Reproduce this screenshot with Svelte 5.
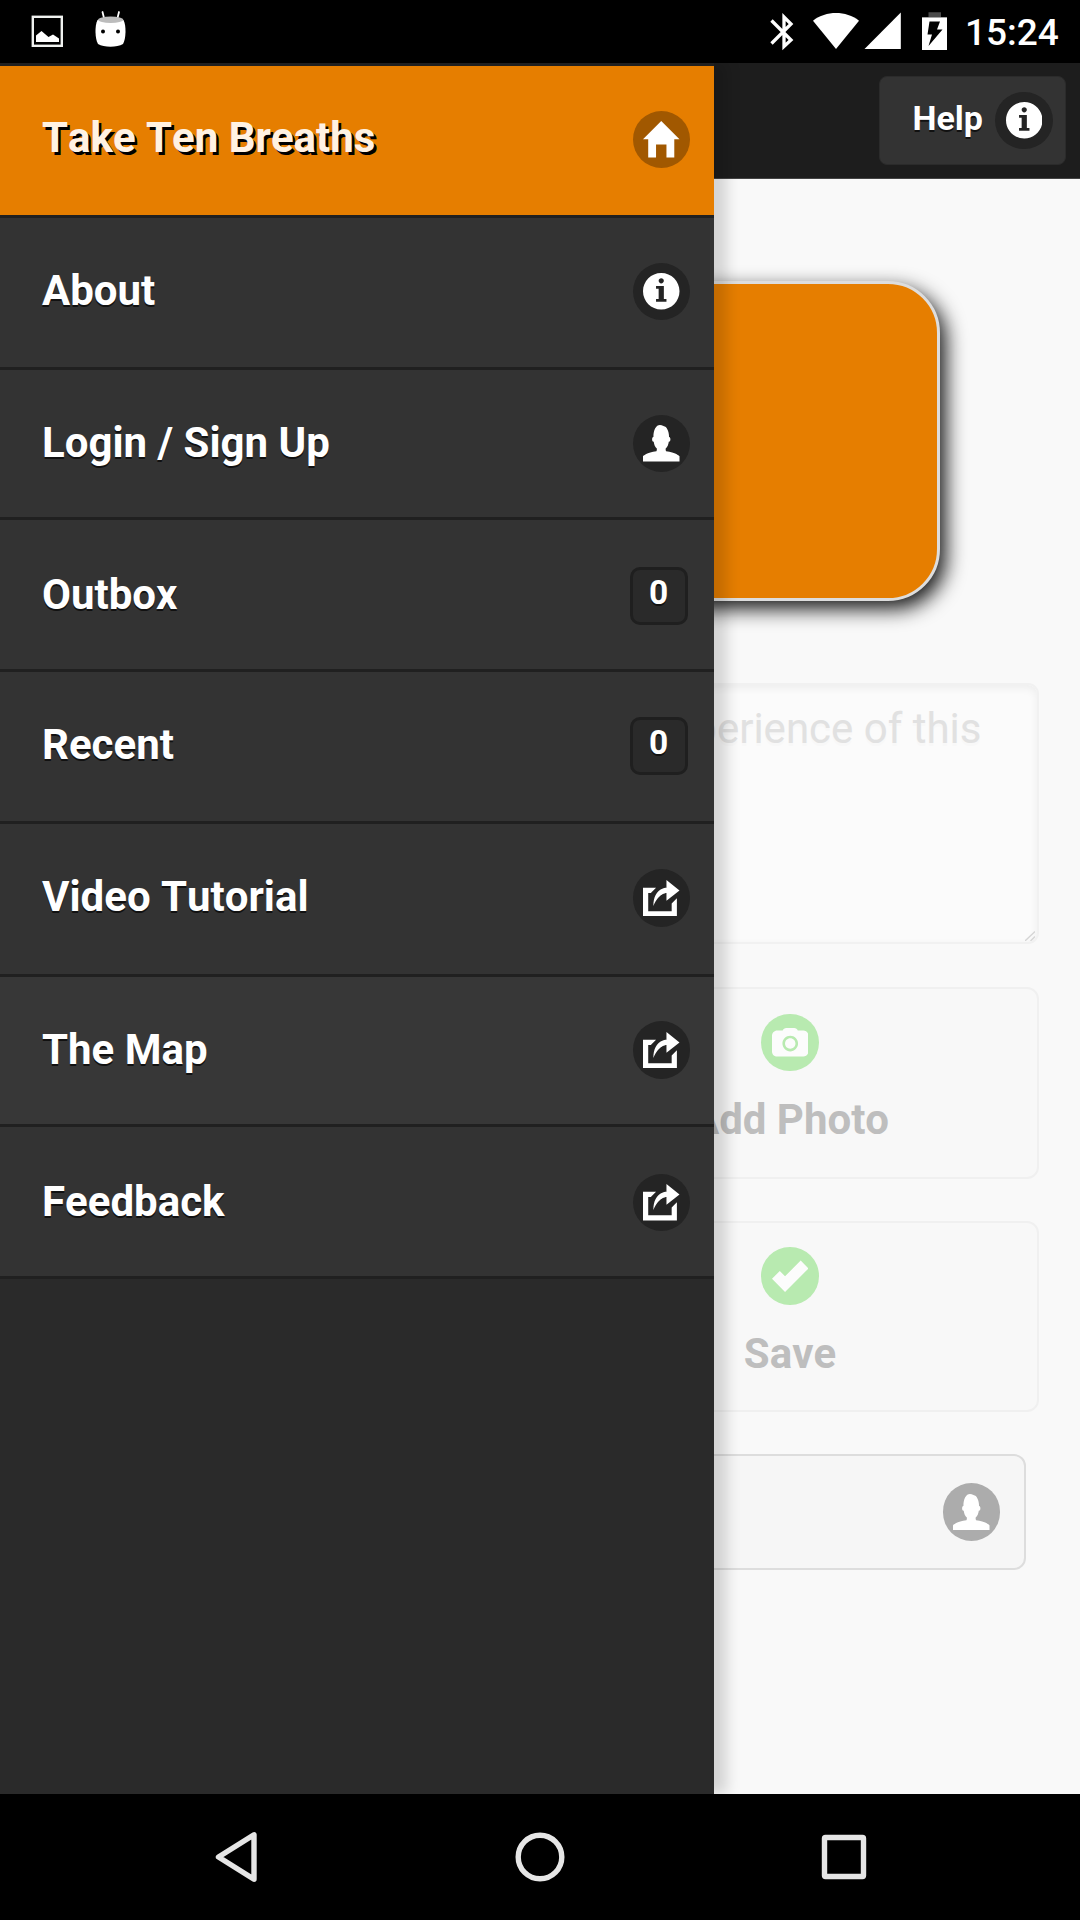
<script>
  const items = [
    { label: 'Take Ten Breaths', icon: 'home', kind: 'active' },
    { label: 'About', icon: 'info' },
    { label: 'Login / Sign Up', icon: 'user', kind: 'short' },
    { label: 'Outbox', count: 0, kind: 'low' },
    { label: 'Recent', count: 0 },
    { label: 'Video Tutorial', icon: 'action', kind: 'tall' },
    { label: 'The Map', icon: 'action', kind: 'hover' },
    { label: 'Feedback', icon: 'action', kind: 'low last' }
  ];

  const icons = {
    home: 'M7,0L0,7H2V14H5V9H9V14H12V7H14Z',
    info: 'M7,0C3.134,0,0,3.134,0,7s3.134,7,7,7s7-3.134,7-7S10.866,0,7,0z M7,2c0.552,0,1,0.447,1,1S7.552,4,7,4S6,3.553,6,3S6.448,2,7,2z M9,11H5v-1h1V6H5V5h3v5h1V11z',
    user: 'M8.851,10.101c-0.18-0.399-0.2-0.763-0.153-1.104C9.383,8.49,9.738,7.621,9.891,6.465C10.493,6.355,10.5,5.967,10.5,5.5c0-0.437-0.008-0.804-0.502-0.94C9.999,4.539,10,4.521,10,4.5c0-2.103-1-4-2-4C8,0.5,7.5,0,6.5,0C5,0,4,1.877,4,4.5c0,0.021,0.001,0.039,0.002,0.06C3.508,4.696,3.5,5.063,3.5,5.5c0,0.467,0.007,0.855,0.609,0.965C4.262,7.621,4.617,8.49,5.303,8.997c0.047,0.341,0.026,0.704-0.153,1.104C1.503,10.503,0,12,0,12v2h14v-2C14,12,12.497,10.503,8.851,10.101z',
    action: 'M9,5v3l5-4L9,0v3c0,0-5,0-5,7C6,5,9,5,9,5z M11,12H2V5h1l2-2H0v11h13V7l-2,2V12z',
    camera: 'M12,2.5H9.908C9.702,1.919,9.152,1.5,8.5,1.5h-3c-0.652,0-1.202,0.419-1.408,1H2c-1.104,0-2,0.896-2,2v6c0,1.104,0.896,2,2,2h10c1.104,0,2-0.896,2-2v-6C14,3.396,13.104,2.5,12,2.5z M7,10.5c-1.657,0-3-1.344-3-3c0-1.657,1.343-3,3-3s3,1.343,3,3C10,9.156,8.657,10.5,7,10.5z M7,5.5c-1.104,0-2,0.896-2,2c0,1.104,0.896,2,2,2s2-0.896,2-2C9,6.396,8.104,5.5,7,5.5z',
    check: 'M14,4L11,1L5,7L3,5L0,8L5,13Z'
  };
</script>

{#snippet disc(name, tone)}
  <span class="disc {tone}">
    <svg viewBox="0 0 14 14" width="36.5" height="36.5"><path d={icons[name]} fill-rule="evenodd" /></svg>
  </span>
{/snippet}

<div class="screen">
  <header class="status">
    <svg class="notices" viewBox="0 0 140 63" width="140" height="63">
      <rect x="32.8" y="16.8" width="29" height="29" fill="none" stroke="#f0f2f0" stroke-width="2.4" />
      <path d="M36 42V35.5L41.5 31L48.5 37L53 34.5L59 38.5V42Z" fill="#fff" />
      <path d="M102.5 12L104 18M119 12L117.5 18" stroke="#fff" stroke-width="1.8" stroke-linecap="round" />
      <path d="M97.5 20C105 17.500 116 17.500 123.500 20C126.500 26 126 39 123 44C117 47.500 104 47.500 98 44C95 39 94.500 26 97.500 20Z" fill="#fff" />
      <ellipse cx="110.700" cy="19.800" rx="12.500" ry="3.200" fill="#bcbcbc" />
      <circle cx="103" cy="31.600" r="2" /><circle cx="118" cy="31.600" r="2" />
    </svg>
    <svg viewBox="0 0 190 63" width="190" height="63">
      <path d="M11.500 20.500L31 40L24 46.500V17L31 24L11.500 43.500" fill="none" stroke="#fff" stroke-width="3.300" />
      <path d="M53 20.700C66 10.500 86 10.500 99 20.700L76 49Z" fill="#fff" />
      <path d="M104.500 49H140.800V12.500Z" fill="#fff" />
      <path d="M162 17H168.500V12.300H181V17H187V24H162Z" fill="#4a4a4a" />
      <path d="M162 17.500H187V50H162Z" fill="#fff" />
      <path d="M169.500 21.500H180L177 29.500H182.500L168.500 46L172 34.500H167.500Z" fill="#000" />
    </svg>
    <time>15:24</time>
  </header>

  <div class="stage">
    <main class="page">
      <div class="toolbar">
        <button class="help"><span>Help</span>{@render disc('info', 'dark')}</button>
      </div>
      <div class="content">
        <div class="breath"></div>
        <div class="note">
          perience of this
          <svg class="grip" viewBox="0 0 10 10" width="10" height="10"><path d="M0 10L10 .5M5.500 10L10 5.500" stroke="#d5d5d5" stroke-width="1.300" /></svg>
        </div>
        <button class="tile">{@render disc('camera', 'green')}<span>Add Photo</span></button>
        <button class="tile save">{@render disc('check', 'green')}<span>Save</span></button>
        <div class="account">{@render disc('user', 'grey')}</div>
      </div>
    </main>

    <nav class="drawer">
      {#each items as item}
        <a class="row {item.kind ?? ''}">
          <span class="label">{item.label}</span>
          {#if item.icon}
            {@render disc(item.icon, item.kind === 'active' ? 'brown' : 'dark')}
          {:else}
            <span class="badge">{item.count}</span>
          {/if}
        </a>
      {/each}
    </nav>
  </div>

  <footer class="navbar">
    <svg viewBox="0 0 50 54" width="50" height="54"><path d="M7.500 27L43 4.800V49.200Z" /></svg>
    <svg viewBox="0 0 54 54" width="54" height="54"><circle cx="27" cy="27" r="21.800" /></svg>
    <svg viewBox="0 0 50 54" width="50" height="54"><rect x="5.500" y="7.500" width="39" height="39" rx="1" /></svg>
  </footer>
</div>

<style>
  :global(body) { background: #000; }
  * { box-sizing: border-box; }
  .screen {
    width: 1080px;
    height: 1920px;
    display: flex;
    flex-direction: column;
    overflow: hidden;
    background: #000;
    font-family: Roboto, sans-serif;
    font-kerning: none;
  }
  .status {
    height: 63px;
    flex: none;
    display: flex;
    align-items: center;
    color: #fff;
  }
  .notices { margin-right: auto; }
  time {
    width: 130px;
    padding: 3px 0 0 15px;
    font-size: 37px;
    font-weight: 500;
    line-height: 44px;
  }
  .stage {
    position: relative;
    height: 1731px;
    overflow: hidden;
  }
  .page { height: 100%; background: #f9f9f9; }
  .toolbar {
    height: 116px;
    padding: 13px 14px 0 0;
    display: flex;
    justify-content: flex-end;
    align-items: flex-start;
    background: #1d1d1d;
    border-bottom: 1px solid #444;
  }
  button { font: inherit; margin: 0; }
  .help {
    width: 187px;
    height: 89px;
    padding: 0 12.5px 0 0;
    display: flex;
    align-items: center;
    justify-content: flex-end;
    gap: 12px;
    border: 1px solid #2b2b2b;
    border-radius: 8px;
    background: #333;
    color: #fff;
    font-size: 34px;
    font-weight: 700;
    text-shadow: 0 2px 0 #111;
  }
  .help span:first-child { padding-bottom: 6px; }
  .content {
    display: flex;
    flex-direction: column;
    align-items: flex-end;
    padding: 102px 41px 0 0;
  }
  .breath {
    width: 800px;
    height: 320px;
    margin-right: 99px;
    border: 3px solid #ddd;
    border-radius: 52px;
    background: #e67e00;
    box-shadow: 6px 8px 20px rgba(0, 0, 0, .9);
  }
  .note {
    position: relative;
    width: 998px;
    height: 261px;
    margin-top: 82px;
    padding: 19px 55.5px 0 0;
    border: 2px solid #f1f1f1;
    border-radius: 11px;
    background: #fbfbfb;
    box-shadow: inset 0 3px 8px rgba(0, 0, 0, .06);
    color: #e1e1e1;
    font-size: 42px;
    line-height: 50px;
    text-align: right;
    text-shadow: 0 3px 0 #f8f8f8;
  }
  .grip { position: absolute; right: 2px; bottom: 1px; }
  .tile {
    width: 498px;
    height: 192px;
    margin-top: 43px;
    padding: 24.5px 0 0;
    display: flex;
    flex-direction: column;
    align-items: center;
    gap: 23.5px;
    border: 2px solid #f0f0f0;
    border-radius: 12px;
    background: #f8f8f8;
    color: #bebebe;
    font-size: 42px;
    line-height: 50px;
    font-weight: 700;
  }
  .save { margin-top: 42px; height: 191px; padding-top: 24px; gap: 24px; }
  .account {
    width: 900px;
    height: 116px;
    margin: 42px 13px 0 0;
    padding: 0 24px 0.500px 0;
    display: flex;
    align-items: center;
    justify-content: flex-end;
    border: 2px solid #ddd;
    border-radius: 12px;
    background: #f6f6f6;
  }
  .disc {
    width: 57.5px;
    height: 57.5px;
    flex: none;
    display: flex;
    align-items: center;
    justify-content: center;
    border-radius: 50%;
    color: #fff;
  }
  .disc path { fill: currentColor; }
  .dark { background: #242424; }
  .brown { background: #a15800; }
  .green { background: #b8eab0; color: #fcfcfc; }
  .grey { background: #acacac; }
  .drawer {
    position: absolute;
    inset: 0 auto 0 0;
    width: 714px;
    background: #2a2a2a;
    box-shadow: 13px 0 13px rgba(0, 0, 0, .15);
  }
  .row {
    height: 152px;
    display: flex;
    align-items: center;
    justify-content: space-between;
    padding: 0 24px 2px 42px;
    border-top: 3px solid #202020;
    background: #333;
    color: #fff;
    font-size: 42px;
    font-weight: 700;
    text-shadow: 0 2px 0 #111;
  }
  .label { padding-bottom: 2px; }
  .short { height: 150px; padding-bottom: 0; }
  .tall { height: 153px; }
  .tall .label, .active .label { padding-bottom: 4px; }
  .low { padding-top: 4px; }
  .active {
    background: #e67e00;
    color: #fff2e3;
    text-shadow: 2.6px 2.6px 0 #000;
  }
  .hover { height: 150px; background: #373737; padding-bottom: 1px; }
  .last { height: 155px; border-bottom: 3px solid #202020; }
  .badge {
    width: 58px;
    height: 58px;
    margin-right: 2px;
    padding-right: 1px;
    border: 3px solid #1f1f1f;
    border-radius: 10px;
    background: #2a2a2a;
    font-size: 33.500px;
    line-height: 46px;
    text-align: center;
  }
  .navbar {
    flex: 1;
    display: flex;
    justify-content: space-between;
    align-items: center;
    padding: 0 211px;
  }
  .navbar svg { fill: none; stroke: #e6e6e6; stroke-width: 5.400; stroke-linejoin: round; }
</style>
